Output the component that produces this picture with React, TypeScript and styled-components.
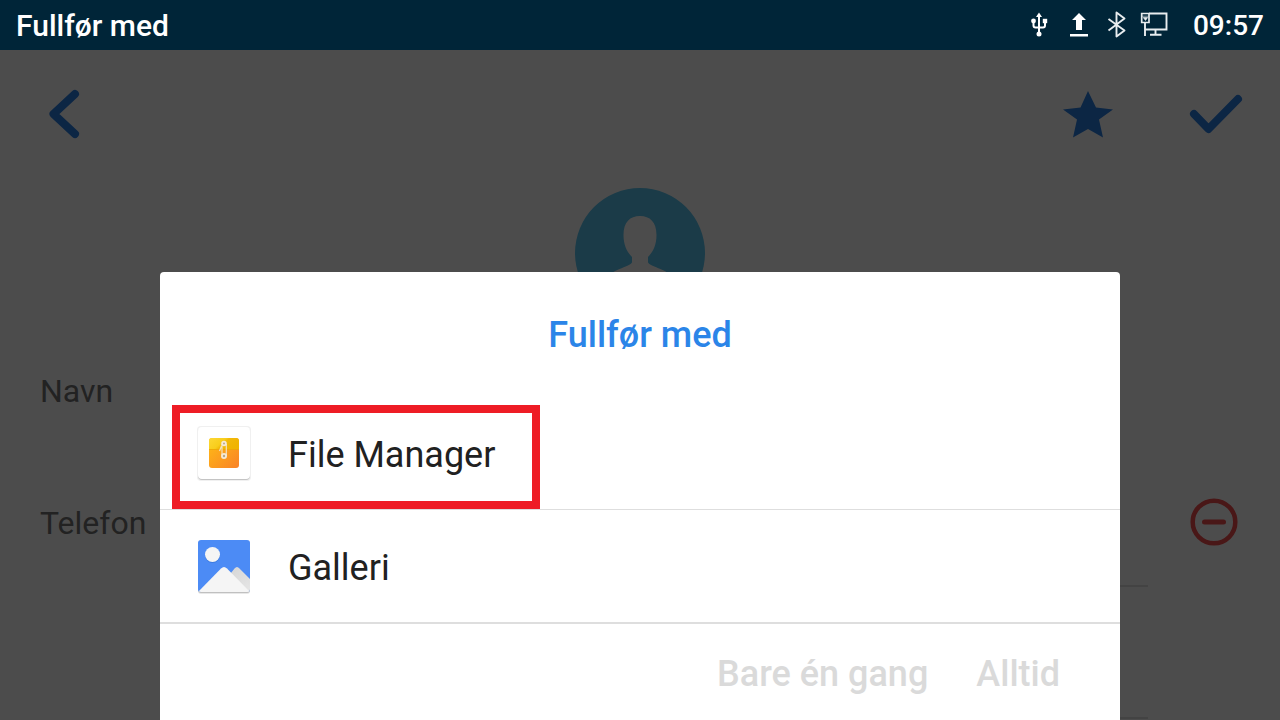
import React from "react";
import styled, { createGlobalStyle, css } from "styled-components";

const GlobalStyle = createGlobalStyle`
  *, *::before, *::after { box-sizing: border-box; }
  body {
    margin: 0;
    background: #ffffff;
    font-family: Roboto, "Liberation Sans", sans-serif;
  }
  button, input { font: inherit; }
`;

const Screen = styled.div`
  position: relative;
  display: flex;
  flex-direction: column;
  min-height: 100vh;
  overflow: hidden;
`;

const StatusBar = styled.header`
  position: relative;
  z-index: 2;
  display: flex;
  align-items: center;
  height: 50px;
  padding: 2px 16px 0;
  background: #002538;
  color: #ffffff;
  font-weight: 500;
`;

const StatusTitle = styled.span`
  flex: 1;
  font-size: 30px;
  line-height: 36px;
`;

const StatusIcons = styled.div`
  display: flex;
  align-items: center;
  gap: 8px;
  margin-right: 24px;

  svg {
    display: block;
    height: 30px;
  }
`;

const Clock = styled.time`
  font-size: 28px;
  line-height: 36px;
`;

const Contact = styled.main`
  display: flex;
  flex-direction: column;
  flex: 1;
`;

const Toolbar = styled.div`
  display: flex;
  align-items: center;
  height: 128px;
  padding: 0 32px;
`;

const IconButton = styled.button<{ $push?: boolean }>`
  display: flex;
  align-items: center;
  justify-content: center;
  width: 64px;
  height: 64px;
  padding: 0;
  border: 0;
  background: none;
  color: #2b7fe3;
  ${(p) => p.$push && css`margin-left: auto;`}
`;

const ToolGroup = styled.div`
  display: flex;
  gap: 64px;
  margin-left: auto;
`;

const Avatar = styled.button`
  align-self: center;
  width: 130px;
  height: 130px;
  margin-top: 10px;
  padding: 0;
  border: 0;
  border-radius: 50%;
  background: none;

  svg { display: block; }
`;

const Form = styled.div`
  margin-top: 5px;
`;

const FormRow = styled.div`
  display: grid;
  grid-template-columns: 200px 1fr 132px;
  height: 132px;
  padding-left: 40px;
`;

const Label = styled.label`
  align-self: center;
  padding-top: 4px;
  color: #737373;
  font-size: 32px;
  line-height: 40px;
`;

const Field = styled.input<{ $line?: boolean }>`
  width: 100%;
  min-width: 0;
  border: 0;
  border-bottom: 2px solid ${(p) => (p.$line ? "#e0e0e0" : "transparent")};
  background: none;
  color: #737373;
  font-size: 32px;
`;

const RemoveButton = styled(IconButton)`
  align-self: center;
  margin: 2px 0 0 34px;
  color: #f54d4d;
`;

const Scrim = styled.div`
  position: absolute;
  inset: 0;
  z-index: 1;
  display: flex;
  align-items: flex-end;
  justify-content: center;
  background: rgba(0, 0, 0, 0.7);
`;

const Sheet = styled.section`
  width: 75%;
  border-radius: 4px 4px 0 0;
  background: #ffffff;
`;

const SheetTitle = styled.h1`
  margin: 0;
  padding: 40px 24px 39px;
  color: #2b85e8;
  font-size: 36px;
  font-weight: 500;
  line-height: 46px;
  text-align: center;
`;

const AppList = styled.ul`
  margin: 0;
  padding: 0;
  list-style: none;
`;

const AppItem = styled.li`
  position: relative;

  & + & { border-top: 1px solid #dedede; }
`;

const AppButton = styled.button`
  display: flex;
  align-items: center;
  gap: 32px;
  width: 100%;
  height: 112px;
  padding: 4px 32px 0;
  border: 0;
  background: none;
  color: #212121;
  font-size: 36px;
  line-height: 44px;
  text-align: left;

  svg { display: block; }
`;

const Highlight = styled.div`
  position: absolute;
  top: 8px;
  bottom: 0;
  left: 12px;
  width: 368px;
  border: 8px solid #ee1c25;
  pointer-events: none;
`;

const Actions = styled.div`
  display: flex;
  justify-content: flex-end;
  gap: 48px;
  height: 98px;
  padding: 4px 60px 0;
  border-top: 2px solid #dedede;
`;

const ActionButton = styled.button`
  padding: 0;
  border: 0;
  background: none;
  color: #dadada;
  font-size: 36px;
  font-weight: 500;
  line-height: 44px;
`;

const UsbIcon = () => (
  <svg width="30" height="30" viewBox="0 0 30 30" aria-hidden="true">
    <g fill="none" stroke="#fff" strokeWidth="2">
      <path d="M15 5V24M9.500 10V14.500Q9.500 16.500 11.500 16.500H19Q21 16.500 21 14.500V10" />
    </g>
    <g fill="#fff">
      <path d="M15 1.500l3 4.500h-6z" />
      <circle cx="9.500" cy="10" r="2.400" />
      <path d="M18.800 7.800h4.400v4.400h-4.400z" />
      <circle cx="15" cy="23" r="2.500" />
    </g>
  </svg>
);

const UploadIcon = () => (
  <svg width="34" height="30" viewBox="0 0 34 30" fill="#fff" aria-hidden="true">
    <path d="M17 2l7 7h-4v10h-6V9h-4zM8 23h18v2.500H8z" />
  </svg>
);

const BluetoothIcon = () => (
  <svg width="26" height="30" viewBox="0 0 26 30" aria-hidden="true">
    <path
      d="M4.500 8L20.500 19.500L12.500 25.500V1.500L20.500 7.500L4.500 19.500"
      fill="none"
      stroke="#e8edef"
      strokeWidth="1.900"
      strokeLinejoin="round"
    />
  </svg>
);

const NetworkIcon = () => (
  <svg width="31" height="30" viewBox="0 0 31 30" fill="none" stroke="#e8edef" aria-hidden="true">
    <path d="M11 2.500H28.500V18.500H7M7 12V25M17.500 19V23.500M12 23.800H23.500" strokeWidth="1.900" />
    <path d="M3.700 2.500H11V11.500H3.700Z" strokeWidth="1.700" />
    <path d="M3.700 5.200H11M5.200 6.500h4.500l-2.200 3z" fill="#e8edef" strokeWidth="0.600" />
  </svg>
);

const BackIcon = () => (
  <svg width="64" height="64" viewBox="0 0 64 64" aria-hidden="true">
    <path d="M43 12L21.500 32L43 52" fill="none" stroke="currentColor" strokeWidth="8" strokeLinecap="round" strokeLinejoin="round" />
  </svg>
);

const StarIcon = () => (
  <svg width="64" height="64" viewBox="0 0 64 64" fill="currentColor" aria-hidden="true">
    <path d="M32 9L40 25.500L57 27.500L43 37.500L47 55.500L32 47L17 55.500L21 37.500L7 27.500L24.500 25.500Z" />
  </svg>
);

const CheckIcon = () => (
  <svg width="64" height="64" viewBox="0 0 64 64" aria-hidden="true">
    <path d="M10 32L24.500 47L54 17" fill="none" stroke="currentColor" strokeWidth="8" strokeLinecap="round" strokeLinejoin="round" />
  </svg>
);

const PersonIcon = () => (
  <svg width="130" height="130" viewBox="0 0 130 130" aria-hidden="true">
    <circle cx="65" cy="65" r="65" fill="#5ac5f0" />
    <path
      d="M65 28C75 28 81.500 34 81.500 47C81.500 57 78 64 73 69V74C73 78 92 81 99 90V109Q65 130 31 109V90C38 81 57 78 57 74V69C52 64 48.500 57 48.500 47C48.500 34 55 28 65 28Z"
      fill="#fff"
    />
  </svg>
);

const RemoveIcon = () => (
  <svg width="64" height="64" viewBox="0 0 64 64" fill="none" stroke="currentColor" aria-hidden="true">
    <circle cx="32" cy="32" r="21.300" strokeWidth="4.500" />
    <path d="M22.500 32H41.500" strokeWidth="5" strokeLinecap="round" />
  </svg>
);

const FileManagerIcon = () => (
  <svg width="64" height="64" viewBox="0 2 64 64" aria-hidden="true">
    <defs>
      <linearGradient id="folderBody" x1="0" y1="0" x2="1" y2="1">
        <stop offset="0" stopColor="#ffbd14" />
        <stop offset="1" stopColor="#f98228" />
      </linearGradient>
      <linearGradient id="folderFlap" x1="0" y1="0" x2="1" y2="0.4">
        <stop offset="0" stopColor="#fdd835" />
        <stop offset="0.5" stopColor="#f8cd1b" />
        <stop offset="0.6" stopColor="#f2b90a" />
        <stop offset="1" stopColor="#f0b400" />
      </linearGradient>
    </defs>
    <rect x="5" y="5" width="54" height="55" rx="4" fill="#f0f0f0" />
    <rect x="6" y="7" width="52" height="52" rx="4" fill="#c4c4c4" />
    <rect x="6" y="6" width="52" height="52" rx="4" fill="#fff" />
    <rect x="17" y="17" width="30" height="30" rx="3" fill="url(#folderBody)" />
    <path d="M17 28V20a3 3 0 0 1 3-3H44a3 3 0 0 1 3 3V28Z" fill="url(#folderFlap)" />
    <path d="M17 28.500H47" stroke="#e9a800" strokeOpacity="0.7" />
    <path d="M30 23V34M34.300 23V35M29.500 25L27.500 30" fill="none" stroke="#f3e3c0" strokeWidth="1.200" />
    <g fill="#b9a88a" stroke="#f5ead6" strokeWidth="1.800">
      <circle cx="32" cy="22.500" r="1.900" />
      <circle cx="32" cy="35" r="2.100" />
    </g>
  </svg>
);

const GalleryIcon = () => (
  <svg width="64" height="64" viewBox="0 2 64 64" aria-hidden="true">
    <defs>
      <clipPath id="tile">
        <rect x="6" y="6" width="52" height="52" rx="3" />
      </clipPath>
      <linearGradient id="rearHill" x1="0" y1="0" x2="1" y2="1">
        <stop offset="0" stopColor="#d2d2d2" />
        <stop offset="1" stopColor="#e6e6e6" />
      </linearGradient>
    </defs>
    <rect x="6" y="8" width="52" height="52" rx="3" fill="#e8e8e8" />
    <rect x="6" y="7" width="52" height="52" rx="3" fill="#c0c0c0" />
    <g clipPath="url(#tile)">
      <rect x="6" y="6" width="52" height="52" fill="#4c8bf5" />
      <path d="M24 58L42.500 34.500Q45 31.500 47.500 34.500L58 45V58Z" fill="url(#rearHill)" />
      <path d="M6 58L29 34.500Q32 31.500 35 34.500L58 58Z" fill="#f5f5f5" />
      <circle cx="20.500" cy="21.500" r="7.500" fill="#3c7be0" />
      <circle cx="20.500" cy="20.500" r="7.500" fill="#f5f5f5" />
    </g>
  </svg>
);

export default function App() {
  return (
    <Screen>
      <GlobalStyle />
      <StatusBar>
        <StatusTitle>Fullfør med</StatusTitle>
        <StatusIcons>
          <UsbIcon />
          <UploadIcon />
          <BluetoothIcon />
          <NetworkIcon />
        </StatusIcons>
        <Clock>09:57</Clock>
      </StatusBar>

      <Contact>
        <Toolbar>
          <IconButton aria-label="Tilbake"><BackIcon /></IconButton>
          <ToolGroup>
            <IconButton aria-label="Favoritt"><StarIcon /></IconButton>
            <IconButton aria-label="Lagre"><CheckIcon /></IconButton>
          </ToolGroup>
        </Toolbar>
        <Avatar aria-label="Velg bilde"><PersonIcon /></Avatar>
        <Form>
          <FormRow>
            <Label htmlFor="name">Navn</Label>
            <Field id="name" type="text" />
          </FormRow>
          <FormRow>
            <Label htmlFor="phone">Telefon</Label>
            <Field id="phone" type="tel" $line />
            <RemoveButton aria-label="Fjern"><RemoveIcon /></RemoveButton>
          </FormRow>
          <FormRow>
            <span />
            <Field type="tel" aria-label="Nytt nummer" $line />
          </FormRow>
        </Form>
      </Contact>

      <Scrim>
        <Sheet role="dialog" aria-labelledby="sheet-title">
          <SheetTitle id="sheet-title">Fullfør med</SheetTitle>
          <AppList>
            <AppItem>
              <AppButton><FileManagerIcon />File Manager</AppButton>
              <Highlight />
            </AppItem>
            <AppItem>
              <AppButton><GalleryIcon />Galleri</AppButton>
            </AppItem>
          </AppList>
          <Actions>
            <ActionButton disabled>Bare én gang</ActionButton>
            <ActionButton disabled>Alltid</ActionButton>
          </Actions>
        </Sheet>
      </Scrim>
    </Screen>
  );
}
